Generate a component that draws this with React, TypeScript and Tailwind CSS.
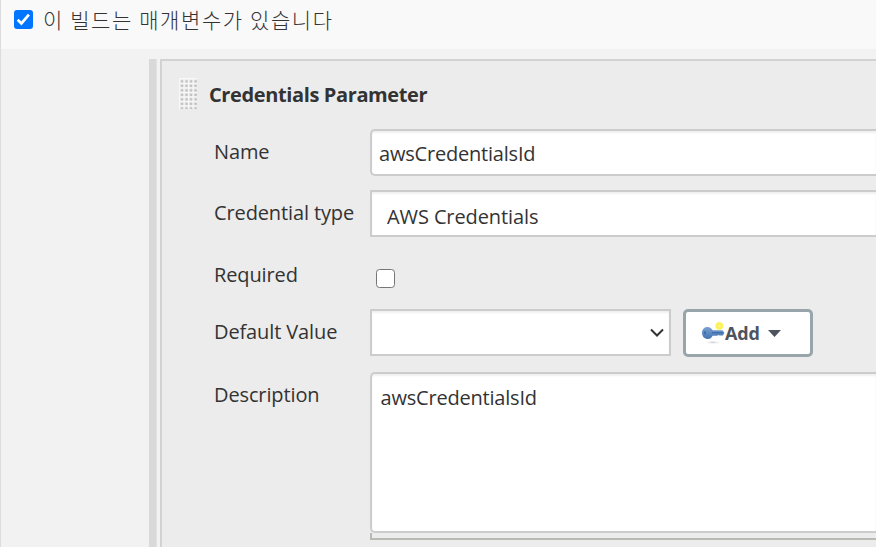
import type { ReactNode } from 'react';

const dotRows = [0, 1, 2, 3, 4, 5, 6];
const dotCols = [0, 1, 2, 3];

function DragHandle() {
  return (
    <svg width="18" height="31" viewBox="0 0 18 31" className="shrink-0">
      <rect width="18" height="31" fill="#f8f8f8" />
      {dotRows.map((r) =>
        dotCols.map((c) => (
          <g key={`${r}-${c}`}>
            <rect x={1.2 + c * 4.5} y={1.6 + r * 4.5} width="3.2" height="3.2" fill="#dedede" />
            <rect x={2.2 + c * 4.5} y={2.4 + r * 4.5} width="2" height="2" fill="#c0c0c0" />
          </g>
        )),
      )}
    </svg>
  );
}

function KeyIcon() {
  return (
    <svg width="24" height="24" viewBox="0 0 24 24" className="shrink-0">
      <defs>
        <linearGradient id="keyBody" x1="0" y1="0" x2="0" y2="1">
          <stop offset="0" stopColor="#7aa2d2" />
          <stop offset="1" stopColor="#4373b2" />
        </linearGradient>
        <radialGradient id="spark">
          <stop offset="0" stopColor="#fffbb0" />
          <stop offset="0.4" stopColor="#fbf04c" />
          <stop offset="0.75" stopColor="#fbf36a" />
          <stop offset="1" stopColor="#fdf8a0" stopOpacity="0" />
        </radialGradient>
        <radialGradient id="keyShade">
          <stop offset="0" stopColor="#cccccc" />
          <stop offset="1" stopColor="#ffffff" stopOpacity="0" />
        </radialGradient>
      </defs>
      <ellipse cx="12" cy="21.4" rx="10" ry="2" fill="url(#keyShade)" />
      <path d="M1 11.5C1.2 8 3.6 6 6.6 6C9 6 10.6 7.4 11.6 9.2L21.5 9.2L23.4 11.8L22 14.6H18.5L17.5 14L16 14.8H11.6C10.7 17 8.8 18.2 6.4 18C3 17.6 1 15 1 11.5Z" fill="url(#keyBody)" />
      <ellipse cx="4" cy="11.8" rx="1" ry="1.8" fill="#3f6ca8" />
      <path d="M11 11.8H22" stroke="#3a69a8" strokeWidth="1.2" />
      <circle cx="18.3" cy="5" r="4.7" fill="url(#spark)" />
    </svg>
  );
}

function Row({ label, height, labelPad, children }: { label: string; height: string; labelPad: string; children: ReactNode }) {
  return (
    <div className={`flex ${height}`}>
      <div className={`w-[156px] shrink-0 whitespace-nowrap leading-7 tracking-[-0.12px] ${labelPad}`}>{label}</div>
      <div className="flex min-w-0 flex-1 items-start">{children}</div>
    </div>
  );
}

export default function App() {
  return (
    <div className="flex h-[547px] w-[876px] flex-col overflow-hidden border-l border-[#dcdcdc] bg-[#f2f2f2] font-['Open_Sans','Noto_Sans_CJK_KR',sans-serif] text-[20px] text-[#333]">
      <header className="flex h-[49px] shrink-0 bg-[#f9f9f9] pl-[13px] pt-[10px]">
        <svg width="19" height="19" viewBox="0 0 19 19" className="shrink-0">
          <rect width="19" height="19" rx="3" fill="#0075ff" />
          <path d="M3.7 9.8L7.4 13.5L14.9 4.7" fill="none" stroke="#fff" strokeWidth="2.7" />
        </svg>
        <span className="-mt-[5px] ml-[10px] whitespace-nowrap font-['Noto_Sans_CJK_KR',sans-serif] text-[21px] font-light leading-7 tracking-[1.6px]">이 빌드는 매개변수가 있습니다</span>
      </header>
      <main className="flex min-h-0 flex-1 pl-[148px] pt-[10px]">
        <div className="mr-[3px] w-2 shrink-0 border-r border-[#e2e2e2] bg-[#d9d9d9]" />
        <section className="min-w-0 flex-1 border-l-2 border-t-2 border-[#d2d2d2] bg-[#ececec]">
          <div className="flex h-[68px] pl-[17px] pt-[17px]">
            <DragHandle />
            <h2 className="ml-3 mt-[3px] text-[20px] font-bold leading-7 tracking-[-0.38px]">Credentials Parameter</h2>
          </div>
          <div className="pl-[52px]">
            <Row label="Name" height="h-[61px]" labelPad="pt-[9px]">
              <div className="h-[47px] flex-1 rounded-l-[5px] border-2 border-r-0 border-[#ccc] bg-white pl-[7px] pt-[9px] leading-7 tracking-[-0.2px] shadow-[inset_0_2px_2px_#f0f0f0]">awsCredentialsId</div>
            </Row>
            <Row label="Credential type" height="h-[61px]" labelPad="pt-[9px]">
              <div className="h-[47px] flex-1 border-2 border-r-0 border-[#ccc] bg-white pl-[15px] pt-[11px] leading-7 tracking-[-0.1px] shadow-[inset_0_2px_2px_#f0f0f0]">AWS Credentials</div>
            </Row>
            <Row label="Required" height="h-[58px]" labelPad="pt-[10px]">
              <div className="ml-[6px] mt-[18px] h-[19px] w-[19px] rounded-[3.5px] border border-[#767676] bg-white" />
            </Row>
            <Row label="Default Value" height="h-[63px]" labelPad="pt-[9px]">
              <div className="flex h-[47px] w-[301px] items-center justify-end border-2 border-[#ccc] bg-white pr-[5px] shadow-[inset_0_2px_2px_#f0f0f0]">
                <svg width="14" height="10" viewBox="0 0 14 10">
                  <path d="M1 1.5L7 7.5L13 1.5" fill="none" stroke="#333" strokeWidth="2" />
                </svg>
              </div>
              <button className="ml-3 flex h-12 w-[130px] items-center rounded-[5px] border-[3px] border-[#98a5ab] bg-white pl-[15px] text-[18px] font-bold text-[#4d545d]">
                <KeyIcon />
                <span className="leading-7 tracking-[-0.2px]">Add</span>
                <svg width="13" height="7" viewBox="0 0 13 7" className="ml-2">
                  <path d="M0 0H13L6.5 7Z" fill="#4d545d" />
                </svg>
              </button>
            </Row>
            <Row label="Description" height="h-[175px]" labelPad="pt-[9px]">
              <div className="flex-1">
                <div className="h-[161px] rounded-l-[5px] border-2 border-r-0 border-[#ccc] bg-white pl-[8.5px] pt-[10px] leading-7 tracking-[-0.2px] shadow-[inset_0_2px_2px_#f0f0f0]">awsCredentialsId</div>
                <div className="h-[7px] border-b-2 border-l-2 border-[#bbb9b3]" />
              </div>
            </Row>
          </div>
        </section>
      </main>
    </div>
  );
}
